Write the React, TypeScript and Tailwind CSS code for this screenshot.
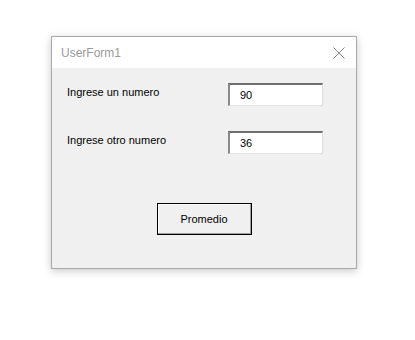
import React from "react";

const Field = ({ label, value }: { label: string; value: string }) => (
  <div className="flex items-start h-[23px]">
    <span className="w-[161px] pt-[2px] text-[11px] leading-[14px] text-black">{label}</span>
    <div className="w-[95px] h-[23px] bg-white border-t-2 border-l-2 border-t-[#6d6d6d] border-l-[#8a8a8a] border-r border-b border-r-[#dcdcdc] border-b-[#e3e3e3] pl-[10px] pt-[3px] text-[11px] leading-[14px] text-black">
      {value}
    </div>
  </div>
);

export default function App() {
  return (
    <div className="w-[415px] h-[340px] bg-white pt-[36px] pl-[51px]" style={{ fontFamily: '"Liberation Sans", Tahoma, sans-serif' }}>
      <div className="w-[306px] h-[233px] flex flex-col border border-[#a9a9a9] shadow-[0_2px_8px_rgba(0,0,0,0.22)]">
        <div className="h-[31px] bg-white flex items-center justify-between pl-[9px] pr-[9px]">
          <span className="text-[12px] text-[#9a9a9a]">UserForm1</span>
          <svg width="12" height="12" viewBox="0 0 12 12" className="mr-[2px]">
            <path d="M0.5 0.5 L11.5 11.5 M11.5 0.5 L0.5 11.5" stroke="#8a8a8a" strokeWidth="1" fill="none" />
          </svg>
        </div>
        <div className="flex-1 bg-[#f0f0f0] flex flex-col pl-[15px] pt-[15px]">
          <div className="flex flex-col gap-[25px]">
            <Field label="Ingrese un numero" value="90" />
            <Field label="Ingrese otro numero" value="36" />
          </div>
          <div className="flex justify-center mt-[49px] pr-[15px]">
            <div className="w-[95px] h-[32px] border border-black bg-[#f0f0f0] flex items-center justify-center shadow-[inset_-1px_-1px_0_#a0a0a0,inset_1px_1px_0_#ffffff] text-[11px] text-black">
              Promedio
            </div>
          </div>
        </div>
      </div>
    </div>
  );
}
